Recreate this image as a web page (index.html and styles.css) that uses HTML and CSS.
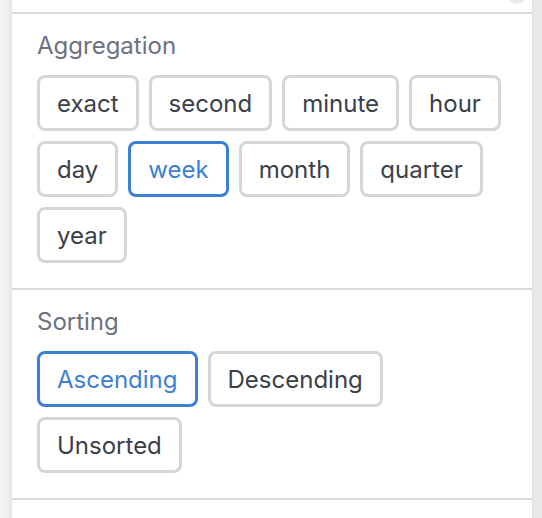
FILE: index.html
```html
<!DOCTYPE html>
<html>
<head>
<meta charset="utf-8">
<link rel="stylesheet" href="styles.css">
</head>
<body>
<div class="panel">
  <div class="top-stub"><span class="knob"></span></div>
  <section class="section">
    <div class="label">Aggregation</div>
    <div class="options">
      <button class="opt">exact</button>
      <button class="opt">second</button>
      <button class="opt">minute</button>
      <button class="opt">hour</button>
      <button class="opt">day</button>
      <button class="opt active">week</button>
      <button class="opt">month</button>
      <button class="opt">quarter</button>
      <button class="opt">year</button>
    </div>
  </section>
  <section class="section">
    <div class="label">Sorting</div>
    <div class="options">
      <button class="opt active">Ascending</button>
      <button class="opt">Descending</button>
      <button class="opt">Unsorted</button>
    </div>
  </section>
  <div class="rest"></div>
</div>
</body>
</html>
```
FILE: styles.css
```css
html, body {
  margin: 0;
  padding: 0;
}
body {
  width: 542px;
  height: 518px;
  overflow: hidden;
  background: linear-gradient(to right, #f4f4f4 0px, #efefef 8px, #e4e4e4 11px, #e9e9e9 11px);
  font-family: Inter, "Noto Sans", sans-serif;
}
.panel {
  margin-left: 12px;
  width: 520px;
  height: 518px;
  background: #fff;
  box-shadow: 1px 0 0 #dedede;
}
.top-stub {
  position: relative;
  height: 12px;
  border-bottom: 2px solid #d6d9dd;
  overflow: hidden;
}
.knob {
  position: absolute;
  right: 6px;
  top: -14px;
  width: 18px;
  height: 18px;
  border-radius: 50%;
  background: #e8e9eb;
}
.section {
  padding: 18px 24px 25px 25px;
  border-bottom: 2px solid #d6d9dd;
}
.label {
  font-size: 24px;
  line-height: 28px;
  color: #6b7280;
  margin-bottom: 15px;
}
.options {
  display: flex;
  flex-wrap: wrap;
  gap: 10px;
}
.opt {
  box-sizing: border-box;
  height: 56px;
  padding: 0 17px;
  border: 3px solid #d3d7dc;
  border-radius: 8px;
  background: #fff;
  font-family: inherit;
  font-size: 24px;
  color: #3b4048;
}
.opt.active {
  border-color: #3d7fd5;
  color: #3d7fd5;
}
```
